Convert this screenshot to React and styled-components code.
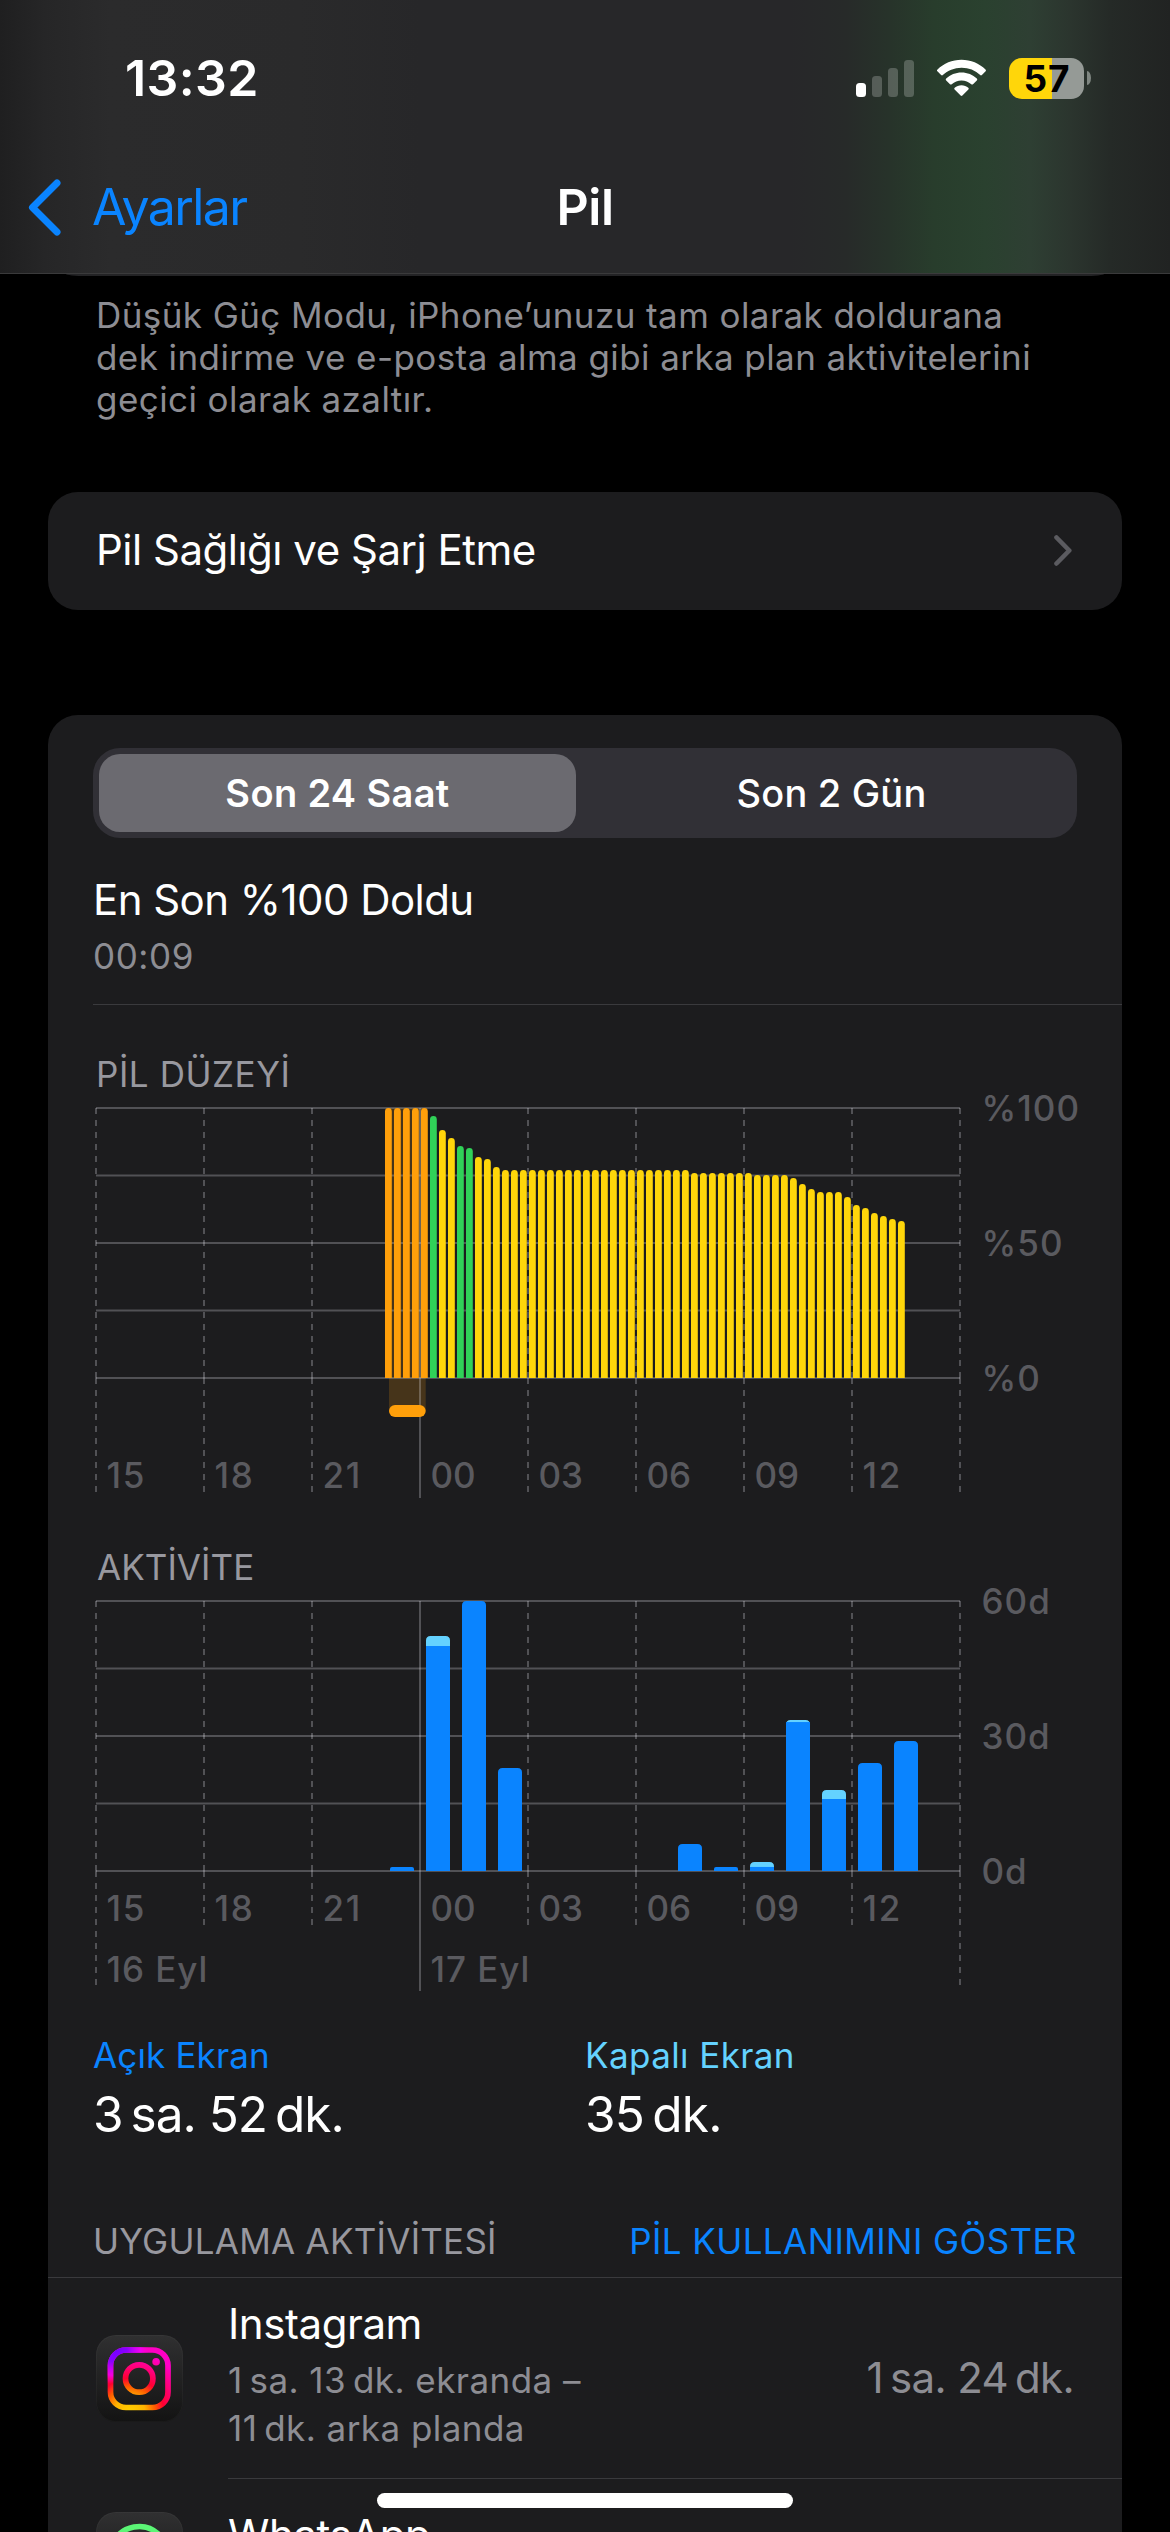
import React from "react";
import styled, { createGlobalStyle, css } from "styled-components";

const GlobalStyle = createGlobalStyle`
  *, *::before, *::after { box-sizing: border-box; }
  html, body { margin: 0; background: #000; }
  body { font-family: Inter, "Liberation Sans", sans-serif; -webkit-font-smoothing: antialiased; }
  svg { display: block; }
`;

const color = {
  card: "#1c1c1e",
  line: "#3a3a3d",
  grid: "rgba(235,235,245,0.26)",
  gray: "#8d8d93",
  caption: "#98989f",
  axis: "#5a5a5f",
  blue: "#0a84ff",
  cyan: "#64d2ff",
  green: "#30d158",
  yellow: "#ffd60a",
  orange: "#ff9f0a",
};

const font = (size, line, spacing = 0, weight = 400) => css`
  font-size: ${size}px;
  line-height: ${line}px;
  letter-spacing: ${spacing}px;
  font-weight: ${weight};
  white-space: nowrap;
`;

const Screen = styled.div`
  position: relative;
  width: 1170px;
  height: 2532px;
  overflow: hidden;
  display: flex;
  flex-direction: column;
  background: #000;
  color: #fff;
`;

/* ---------- header ---------- */

const Header = styled.header`
  flex: none;
  height: 274px;
  border-bottom: 1px solid #3a3a3b;
  background: linear-gradient(
    90deg,
    #1f1f20 0, #262627 45px, #2b2b2c 110px, #2a2a2b 300px, #272729 420px, #272729 790px,
    #272a29 845px, #27332a 890px, #283d2c 935px, #2a412f 985px, #2e3f33 1030px,
    #2b352e 1070px, #252a27 1110px, #212322 1170px
  );
`;

const StatusBar = styled.div`
  height: 156px;
  padding: 0 79px 0 125px;
  display: flex;
  align-items: center;
  justify-content: space-between;
`;

const Clock = styled.div`
  ${font(50, 60, 0.4, 600)}
`;

const StatusIcons = styled.div`
  display: flex;
  align-items: center;
`;

const Signal = styled.div`
  display: flex;
  align-items: flex-end;
  gap: 6px;
  height: 37px;
  margin-right: 22px;
`;

const SignalBar = styled.i`
  width: 10px;
  height: ${(p) => p.$h}px;
  border-radius: 3.5px;
  background: ${(p) => (p.$on ? "#fff" : "rgba(255,255,255,0.22)")};
`;

const Battery = styled.div`
  width: 75px;
  height: 41px;
  margin-left: 22px;
  padding-left: 1px;
  border-radius: 13px;
  display: flex;
  align-items: center;
  justify-content: center;
  background: linear-gradient(90deg, ${color.yellow} 43px, #959a96 43px);
  color: #000;
  ${font(37, 41, 0.8, 700)}
`;

const BatteryCap = styled.i`
  width: 4px;
  height: 14px;
  margin-left: 3px;
  border-radius: 0 4px 4px 0 / 0 7px 7px 0;
  background: #7f8681;
`;

const NavBar = styled.nav`
  height: 102px;
  padding: 0 28px;
  display: grid;
  grid-template-columns: 1fr auto 1fr;
  align-items: center;
`;

const Back = styled.a`
  display: flex;
  align-items: center;
  gap: 31px;
  color: ${color.blue};
  ${font(50, 60, -1.6)}
`;

const NavTitle = styled.h1`
  margin: 0;
  ${font(50, 60, -0.4, 600)}
`;

/* ---------- content ---------- */

const CardTail = styled.div`
  flex: none;
  height: 2px;
  margin: 0 66px;
  border-radius: 0 0 20px 20px / 0 0 2px 2px;
  background: #232325;
`;

const FootNote = styled.p`
  flex: none;
  margin: 18px 96px 0;
  color: ${color.gray};
  ${font(35, 42, 0.42)}
`;

const LinkCard = styled.div`
  flex: none;
  height: 118px;
  margin: 72px 48px 0;
  padding: 0 50px 2px 48px;
  border-radius: 30px;
  display: flex;
  align-items: center;
  justify-content: space-between;
  background: ${color.card};
  ${font(42, 50, -0.5)}
`;

const Card = styled.section`
  flex: none;
  margin: 105px 48px 0;
  padding-top: 33px;
  border-radius: 30px 30px 0 0;
  display: flex;
  flex-direction: column;
  background: ${color.card};
`;

const Segmented = styled.div`
  height: 90px;
  margin: 0 45px;
  padding: 6px;
  border-radius: 27px;
  display: flex;
  background: #313036;
`;

const Segment = styled.div`
  flex: ${(p) => (p.$active ? "0 0 477px" : "1")};
  padding-left: ${(p) => (p.$active ? 0 : 16)}px;
  border-radius: 21px;
  text-align: center;
  background: ${(p) => (p.$active ? "#6b6a70" : "transparent")};
  ${(p) => (p.$active ? font(38, 78, 0.35, 600) : font(38, 78, 0.2, 500))}
`;

const LastCharge = styled.div`
  padding: 37px 45px 26px;
  display: flex;
  flex-direction: column;
  gap: 9px;
`;

const LastChargeTitle = styled.div`
  ${font(42, 50, -0.55)}
`;

const LastChargeTime = styled.div`
  color: ${color.gray};
  ${font(35, 44, 0.6)}
`;

const Divider = styled.hr`
  width: auto;
  height: 1px;
  margin: 0 0 0 ${(p) => p.$inset || 0}px;
  border: 0;
  background: ${color.line};
`;

const ChartTitle = styled.h2`
  margin: ${(p) => p.$top}px 0 0 ${(p) => p.$left}px;
  color: ${color.caption};
  ${(p) => font(35, 44, p.$spacing)}
`;

const Chart = styled.svg`
  width: 1074px;
  height: ${(p) => p.$h}px;
  overflow: visible;
`;

const AxisText = styled.text`
  fill: ${color.axis};
  font: 500 35px Inter, "Liberation Sans", sans-serif;
  letter-spacing: ${(p) => p.$spacing ?? 0.3}px;
`;

const Totals = styled.div`
  margin-top: 39px;
  padding: 0 45px;
  display: grid;
  grid-template-columns: 492px 1fr;
`;

const Total = styled.div`
  display: flex;
  flex-direction: column;
  gap: 7px;
`;

const TotalLabel = styled.div`
  color: ${(p) => p.$color};
  ${(p) => font(35, 44, p.$spacing)}
`;

const TotalValue = styled.div`
  ${(p) => font(49.5, 60, p.$spacing)}
`;

const ListHeader = styled.div`
  margin-top: 75px;
  padding: 0 45px 14px;
  display: flex;
  justify-content: space-between;
  color: ${color.caption};
  ${font(35, 44, 0.25)}
`;

const ListAction = styled.a`
  color: ${color.blue};
  letter-spacing: 0.42px;
`;

const AppRow = styled.div`
  height: 200px;
  padding: ${(p) => p.$top}px 48px 0;
  display: grid;
  grid-template-columns: 87px 1fr auto;
  column-gap: 45px;
`;

const AppIcon = styled.div`
  width: 87px;
  height: 87px;
  margin-top: ${(p) => p.$top}px;
  border-radius: 20px;
  background: linear-gradient(#303031, #131313);
  box-shadow: inset 0 0 0 1px rgba(255, 255, 255, 0.03);
`;

const AppInfo = styled.div`
  display: flex;
  flex-direction: column;
  gap: 7px;
`;

const AppName = styled.div`
  ${font(42, 50, -0.42)}
`;

const AppDetail = styled.div`
  color: ${color.gray};
  ${font(35, 48, 0.45)}
`;

const AppTime = styled.div`
  padding-top: 54px;
  color: ${color.gray};
  ${font(42, 50, -0.63)}
`;

const HomeIndicator = styled.div`
  position: absolute;
  left: 377px;
  bottom: 24px;
  width: 416px;
  height: 15px;
  border-radius: 8px;
  background: #fff;
`;

/* ---------- charts ---------- */

const LEFT = 48;
const TOP = 12;
const PLOT_W = 864;
const PLOT_H = 270;
const STEP = 108;
const HOURS = ["15", "18", "21", "00", "03", "06", "09", "12"];

function Grid({ tickEnd, edgeEnd, dayEnd }) {
  const base = TOP + PLOT_H;
  return (
    <g stroke={color.grid} strokeWidth="2">
      {[0, 1, 2, 3, 4].map((i) => (
        <line key={i} x1={LEFT} x2={LEFT + PLOT_W} y1={TOP + i * 67.5} y2={TOP + i * 67.5} />
      ))}
      {[0, 1, 2, 3, 4, 5, 6, 7, 8].map((i) => {
        const x = LEFT + i * STEP;
        if (i === 3) return <line key={i} x1={x} x2={x} y1={TOP} y2={dayEnd} />;
        const end = i === 0 || i === 8 ? edgeEnd : tickEnd;
        return (
          <g key={i} strokeDasharray="6 6">
            <line x1={x} x2={x} y1={TOP} y2={base} />
            <line x1={x} x2={x} y1={base} y2={end} />
          </g>
        );
      })}
    </g>
  );
}

function AxisLabels({ hourY, scale }) {
  return (
    <>
      {HOURS.map((h, i) => (
        <AxisText key={h} x={LEFT + i * STEP + 10.5} y={hourY} $spacing={i < 3 || i === 7 ? 1.6 : 0}>
          {h}
        </AxisText>
      ))}
      {scale.map((s, i) => (
        <AxisText key={s} x="933.5" y={TOP + 13 + i * 135} $spacing={1}>
          {s}
        </AxisText>
      ))}
    </>
  );
}

const LEVELS = [
  100, 100, 100, 100, 100, 97, 92, 89, 86, 85, 82, 81, 78,
  ...Array(21).fill(77),
  ...Array(7).fill(76),
  75, 75, 75, 75, 74, 72, 70, 69, 69, 69, 67, 64, 63, 61, 60, 59, 58,
];
const levelColor = (i) => {
  if (i < 5) return color.orange;
  return i === 5 || i === 8 || i === 9 ? color.green : color.yellow;
};

function LevelChart() {
  const base = TOP + PLOT_H;
  return (
    <Chart $h={404} viewBox="0 0 1074 404">
      <rect x="341" y={TOP} width="36.7" height="303" fill={color.orange} opacity="0.19" />
      <Grid tickEnd={396} edgeEnd={396} dayEnd={402} />
      {LEVELS.map((v, i) => {
        const x = LEFT + (32 + i) * 9 + 1;
        const y = base - Math.round(v * 2.7);
        return (
          <path
            key={i}
            d={`M${x} ${base}V${y + 3.4}a3.4 3.4 0 0 1 6.8 0V${base}z`}
            fill={levelColor(i)}
          />
        );
      })}
      <rect x="341" y="309" width="36.7" height="12" rx="6" fill={color.orange} />
      <AxisLabels hourY={392} scale={["%100", "%50", "%0"]} />
    </Chart>
  );
}

/* hour slot, minutes with screen on, minutes with screen off */
const ACTIVITY = [
  [8, 0.9, 0], [9, 50, 2.2], [10, 60, 0], [11, 22.9, 0], [16, 6, 0], [17, 0.9, 0],
  [18, 0.9, 1.1], [19, 33.1, 0.45], [20, 16, 2], [21, 24, 0], [22, 28.9, 0],
];

function ActivityChart() {
  const base = TOP + PLOT_H;
  return (
    <Chart $h={405} viewBox="0 0 1074 405">
      <Grid tickEnd={336} edgeEnd={396} dayEnd={402} />
      {ACTIVITY.map(([hour, on, off]) => {
        const x = LEFT + hour * 36 + 6;
        const total = (on + off) * 4.5;
        const lit = on * 4.5;
        const r = Math.min(4.5, total / 2);
        return (
          <g key={hour}>
            <path
              d={`M${x} ${base}v${-(total - r)}q0 ${-r} ${r} ${-r}h${24 - 2 * r}q${r} 0 ${r} ${r}V${base}z`}
              fill={off ? color.cyan : color.blue}
            />
            {off > 0 && <rect x={x} y={base - lit} width="24" height={lit} fill={color.blue} />}
          </g>
        );
      })}
      <AxisLabels hourY={332} scale={["60d", "30d", "0d"]} />
      <AxisText x={LEFT + 10.5} y="393" $spacing={0.95}>16 Eyl</AxisText>
      <AxisText x={LEFT + 3 * STEP + 10.5} y="393" $spacing={0.95}>17 Eyl</AxisText>
    </Chart>
  );
}

/* ---------- icons ---------- */

const WifiIcon = () => (
  <svg width="51" height="38" viewBox="0 0 51 38">
    <g fill="#fff">
      <path d="M25.5 0.7c9.3 0 17.8 3.7 24 9.7.6.6.6 1.3.1 1.9l-3.7 3.7c-.5.5-1.2.5-1.7.1A26.8 26.8 0 0 0 25.5 8.700c-7.200 0-13.800 2.800-18.700 7.400-.5.5-1.200.4-1.700-.1L1.400 12.300c-.6-.6-.5-1.300.1-1.900 6.200-6 14.700-9.700 24-9.700z" />
      <path d="M25.5 13.5c5.9 0 11.3 2.3 15.3 6 .6.6.6 1.3 0 1.9L37 25.2c-.5.5-1.2.5-1.7.1a14.4 14.4 0 0 0-19.6 0c-.5.4-1.2.4-1.7-.1l-3.8-3.8c-.6-.6-.6-1.300 0-1.900 4-3.700 9.400-6 15.300-6z" />
      <path d="M25.5 26.3c2.6 0 5 .9 6.8 2.5.6.5.6 1.2.1 1.7l-6 6.100c-.6.6-1.200.6-1.800 0l-6-6.100c-.5-.5-.5-1.200.1-1.700 1.800-1.600 4.200-2.500 6.800-2.500z" />
    </g>
  </svg>
);

const BackChevron = () => (
  <svg width="33" height="57" viewBox="0 0 33 57" fill="none">
    <path d="M29 4L4.5 28.5L29 53" stroke={color.blue} strokeWidth="7" strokeLinecap="round" strokeLinejoin="round" />
  </svg>
);

const RowChevron = () => (
  <svg width="18" height="31" viewBox="0 0 18 31" fill="none">
    <path d="M2.5 2.5L15.3 15.5L2.5 28.5" stroke="#5b5b60" strokeWidth="4.6" strokeLinecap="round" strokeLinejoin="round" />
  </svg>
);

const cameraShape = (paint) => (
  <>
    <rect x="14.5" y="15" width="57.5" height="57.5" rx="15.5" fill="none" stroke={paint} strokeWidth="5.7" />
    <circle cx="43.2" cy="43.5" r="13.7" fill="none" stroke={paint} strokeWidth="5.7" />
    <circle cx="60.1" cy="26.7" r="3.8" fill={paint} />
  </>
);

const InstagramGlyph = () => (
  <svg width="87" height="87" viewBox="0 0 87 87">
    <defs>
      <radialGradient id="warm" gradientUnits="userSpaceOnUse" cx="34" cy="77" r="75">
        <stop offset="0" stopColor="#ffd000" />
        <stop offset="0.2" stopColor="#ffb400" />
        <stop offset="0.34" stopColor="#ff5a00" />
        <stop offset="0.45" stopColor="#ff0030" />
        <stop offset="0.6" stopColor="#ff0078" />
        <stop offset="0.8" stopColor="#ff00c8" />
        <stop offset="1" stopColor="#ff00c0" />
      </radialGradient>
      <radialGradient id="cool" gradientUnits="userSpaceOnUse" cx="19" cy="15" r="34">
        <stop offset="0" stopColor="#7400ff" />
        <stop offset="0.35" stopColor="#8a00ff" />
        <stop offset="0.75" stopColor="#f000ff" stopOpacity="0.8" />
        <stop offset="1" stopColor="#ff00d0" stopOpacity="0" />
      </radialGradient>
    </defs>
    {cameraShape("url(#warm)")}
    <rect x="14.5" y="15" width="57.5" height="57.5" rx="15.5" fill="none" stroke="url(#cool)" strokeWidth="5.7" />
  </svg>
);

const WhatsAppGlyph = () => (
  <svg width="87" height="87" viewBox="0 0 87 87" fill="none">
    <path
      d="M18.2 57.5A28.7 28.7 0 1 1 29.5 68.5L14.5 72.5z"
      stroke="#5bf675"
      strokeWidth="5.5"
      strokeLinejoin="round"
    />
  </svg>
);

/* ---------- screen ---------- */

export default function App() {
  return (
    <Screen>
      <GlobalStyle />
      <Header>
        <StatusBar>
          <Clock>13:32</Clock>
          <StatusIcons>
            <Signal>
              <SignalBar $h={14} $on />
              <SignalBar $h={21} />
              <SignalBar $h={29} />
              <SignalBar $h={37} />
            </Signal>
            <WifiIcon />
            <Battery>57</Battery>
            <BatteryCap />
          </StatusIcons>
        </StatusBar>
        <NavBar>
          <Back>
            <BackChevron />
            Ayarlar
          </Back>
          <NavTitle>Pil</NavTitle>
        </NavBar>
      </Header>

      <CardTail />
      <FootNote>
        Düşük Güç Modu, iPhone’unuzu tam olarak doldurana
        <br />
        dek indirme ve e-posta alma gibi arka plan aktivitelerini
        <br />
        geçici olarak azaltır.
      </FootNote>

      <LinkCard>
        Pil Sağlığı ve Şarj Etme
        <RowChevron />
      </LinkCard>

      <Card>
        <Segmented>
          <Segment $active>Son 24 Saat</Segment>
          <Segment>Son 2 Gün</Segment>
        </Segmented>
        <LastCharge>
          <LastChargeTitle>En Son %100 Doldu</LastChargeTitle>
          <LastChargeTime>00:09</LastChargeTime>
        </LastCharge>
        <Divider $inset={45} />

        <ChartTitle $top={47} $left={48} $spacing={0.56}>PİL DÜZEYİ</ChartTitle>
        <LevelChart />
        <ChartTitle $top={45} $left={49} $spacing={0.05}>AKTİVİTE</ChartTitle>
        <ActivityChart />

        <Totals>
          <Total>
            <TotalLabel $color={color.blue} $spacing={0.15}>Açık Ekran</TotalLabel>
            <TotalValue $spacing={-1}>{"3\u2009sa. 52\u2009dk."}</TotalValue>
          </Total>
          <Total>
            <TotalLabel $color={color.cyan} $spacing={0.4}>Kapalı Ekran</TotalLabel>
            <TotalValue $spacing={-0.8}>{"35\u2009dk."}</TotalValue>
          </Total>
        </Totals>

        <ListHeader>
          UYGULAMA AKTİVİTESİ
          <ListAction>PİL KULLANIMINI GÖSTER</ListAction>
        </ListHeader>
        <Divider />
        <AppRow $top={21}>
          <AppIcon $top={36}>
            <InstagramGlyph />
          </AppIcon>
          <AppInfo>
            <AppName>Instagram</AppName>
            <AppDetail>
              {"1\u2009sa. 13\u2009dk. ekranda –"}
              <br />
              {"11\u2009dk. arka planda"}
            </AppDetail>
          </AppInfo>
          <AppTime>{"1\u2009sa. 24\u2009dk."}</AppTime>
        </AppRow>
        <Divider $inset={180} />
        <AppRow $top={31}>
          <AppIcon $top={2}>
            <WhatsAppGlyph />
          </AppIcon>
          <AppInfo>
            <AppName>WhatsApp</AppName>
          </AppInfo>
        </AppRow>
      </Card>
      <HomeIndicator />
    </Screen>
  );
}
